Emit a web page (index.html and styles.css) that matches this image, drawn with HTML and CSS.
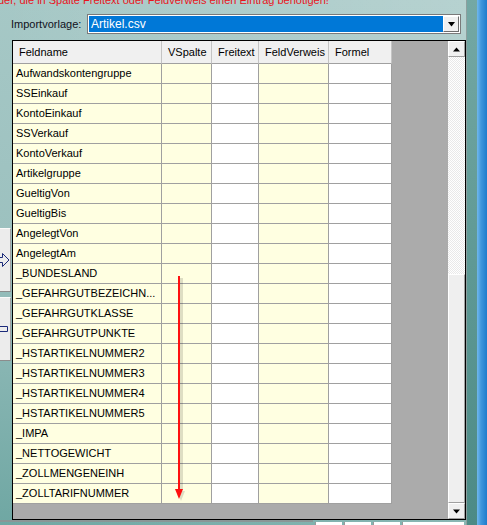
FILE: index.html
```
<!DOCTYPE html>
<html lang="de">
<head>
<meta charset="utf-8">
<title>Importvorlage</title>
<link rel="stylesheet" href="styles.css">
</head>
<body>
<div class="screen">
  <div class="panel">
    <div class="note"><span class="note-text">der, die in Spalte Freitext oder Feldverweis einen Eintrag benötigen!</span></div>
    <div class="import-row">
      <span class="import-label">Importvorlage:</span>
      <div class="combo">
        <div class="combo-value">Artikel.csv</div>
        <div class="combo-btn"><svg width="9" height="5" viewBox="0 0 9 5"><path d="M1 0H8L4.5 4.5Z" fill="#000"/></svg></div>
      </div>
    </div>
    <div class="main">
      <div class="side">
        <div class="side-btn">
          <svg class="side-icon" width="11" height="16" viewBox="0 0 11 16"><path d="M-6 5.5H2.5V1.5L9 8L2.5 14.5V10.5H-6Z" fill="none" stroke="#1b2a7a" stroke-width="1"/></svg>
        </div>
        <div class="side-btn">
          <svg class="side-icon" width="11" height="16" viewBox="0 0 11 16"><path d="M7.5 5.5H-1.5V1.5L-8 8L-1.5 14.5V10.5H7.5Z" fill="none" stroke="#1b2a7a" stroke-width="1"/></svg>
        </div>
      </div>
      <div class="grid">
        <div class="cells">
          <div class="row head">
            <div class="cell">Feldname</div>
            <div class="cell">VSpalte</div>
            <div class="cell">Freitext</div>
            <div class="cell">FeldVerweis</div>
            <div class="cell">Formel</div>
          </div>
          <div class="row"><div class="cell name">Aufwandskontengruppe</div><div class="cell y"></div><div class="cell w"></div><div class="cell y"></div><div class="cell w"></div></div>
          <div class="row"><div class="cell name">SSEinkauf</div><div class="cell y"></div><div class="cell w"></div><div class="cell y"></div><div class="cell w"></div></div>
          <div class="row"><div class="cell name">KontoEinkauf</div><div class="cell y"></div><div class="cell w"></div><div class="cell y"></div><div class="cell w"></div></div>
          <div class="row"><div class="cell name">SSVerkauf</div><div class="cell y"></div><div class="cell w"></div><div class="cell y"></div><div class="cell w"></div></div>
          <div class="row"><div class="cell name">KontoVerkauf</div><div class="cell y"></div><div class="cell w"></div><div class="cell y"></div><div class="cell w"></div></div>
          <div class="row"><div class="cell name">Artikelgruppe</div><div class="cell y"></div><div class="cell w"></div><div class="cell y"></div><div class="cell w"></div></div>
          <div class="row"><div class="cell name">GueltigVon</div><div class="cell y"></div><div class="cell w"></div><div class="cell y"></div><div class="cell w"></div></div>
          <div class="row"><div class="cell name">GueltigBis</div><div class="cell y"></div><div class="cell w"></div><div class="cell y"></div><div class="cell w"></div></div>
          <div class="row"><div class="cell name">AngelegtVon</div><div class="cell y"></div><div class="cell w"></div><div class="cell y"></div><div class="cell w"></div></div>
          <div class="row"><div class="cell name">AngelegtAm</div><div class="cell y"></div><div class="cell w"></div><div class="cell y"></div><div class="cell w"></div></div>
          <div class="row"><div class="cell name">_BUNDESLAND</div><div class="cell y"></div><div class="cell w"></div><div class="cell y"></div><div class="cell w"></div></div>
          <div class="row"><div class="cell name">_GEFAHRGUTBEZEICHN...</div><div class="cell y"></div><div class="cell w"></div><div class="cell y"></div><div class="cell w"></div></div>
          <div class="row"><div class="cell name">_GEFAHRGUTKLASSE</div><div class="cell y"></div><div class="cell w"></div><div class="cell y"></div><div class="cell w"></div></div>
          <div class="row"><div class="cell name">_GEFAHRGUTPUNKTE</div><div class="cell y"></div><div class="cell w"></div><div class="cell y"></div><div class="cell w"></div></div>
          <div class="row"><div class="cell name">_HSTARTIKELNUMMER2</div><div class="cell y"></div><div class="cell w"></div><div class="cell y"></div><div class="cell w"></div></div>
          <div class="row"><div class="cell name">_HSTARTIKELNUMMER3</div><div class="cell y"></div><div class="cell w"></div><div class="cell y"></div><div class="cell w"></div></div>
          <div class="row"><div class="cell name">_HSTARTIKELNUMMER4</div><div class="cell y"></div><div class="cell w"></div><div class="cell y"></div><div class="cell w"></div></div>
          <div class="row"><div class="cell name">_HSTARTIKELNUMMER5</div><div class="cell y"></div><div class="cell w"></div><div class="cell y"></div><div class="cell w"></div></div>
          <div class="row"><div class="cell name">_IMPA</div><div class="cell y"></div><div class="cell w"></div><div class="cell y"></div><div class="cell w"></div></div>
          <div class="row"><div class="cell name">_NETTOGEWICHT</div><div class="cell y"></div><div class="cell w"></div><div class="cell y"></div><div class="cell w"></div></div>
          <div class="row"><div class="cell name">_ZOLLMENGENEINH</div><div class="cell y"></div><div class="cell w"></div><div class="cell y"></div><div class="cell w"></div></div>
          <div class="row"><div class="cell name">_ZOLLTARIFNUMMER</div><div class="cell y"></div><div class="cell w"></div><div class="cell y"></div><div class="cell w"></div></div>
        </div>
        <div class="vscroll">
          <div class="sb-btn"><svg width="9" height="5" viewBox="0 0 9 5"><path d="M4.5 0.5L8 4.5H1Z" fill="#000"/></svg></div>
          <div class="sb-track"></div>
          <div class="sb-thumb"></div>
          <div class="sb-btn"><svg width="9" height="5" viewBox="0 0 9 5"><path d="M1 0.5H8L4.5 4.5Z" fill="#000"/></svg></div>
        </div>
        <svg class="red-arrow" width="18" height="228" viewBox="0 0 18 228">
          <rect x="9" y="3" width="3" height="212" fill="rgba(0,0,0,0.13)"/>
          <path d="M6 216H14L10 226Z" fill="rgba(0,0,0,0.13)"/>
          <rect x="7" y="1" width="2" height="214" fill="#ff1010"/>
          <path d="M4 214H12L8 224Z" fill="#ff1010"/>
        </svg>
      </div>
    </div>
    <div class="footer">
      <div class="ft-fill"></div>
      <div class="ft-tab"></div>
      <div class="ft-tab"></div>
      <div class="ft-tab"></div>
      <div class="ft-tab wide"></div>
    </div>
  </div>
  <div class="frame"></div>
  <div class="desktop"></div>
</div>
</body>
</html>
```
FILE: styles.css
```
* { box-sizing: border-box; }
html, body { margin: 0; padding: 0; }
body {
  width: 487px;
  height: 525px;
  overflow: hidden;
  font-family: "Liberation Sans", Arial, sans-serif;
  font-size: 11px;
  color: #000;
}
.screen {
  display: flex;
  width: 487px;
  height: 525px;
  overflow: hidden;
}
.panel {
  width: 467px;
  flex: none;
  border-right: 1px solid #8d9f9e;
  background:
    linear-gradient(90deg, rgba(255,255,255,0) 0%, rgba(255,255,255,0.18) 100%),
    linear-gradient(180deg, #a6c8c6 0%, #9cc1bf 45%, #6fa7a3 100%);
  display: flex;
  flex-direction: column;
}
.frame {
  width: 10px;
  flex: none;
  background: linear-gradient(180deg, #74a8a4 0%, #5f9995 50%, #4c8a85 100%);
}
.desktop {
  flex: 1;
  background: linear-gradient(90deg, #72b8ec 0%, #3f97dc 40%, #1f7ccc 100%);
}
.note {
  height: 8px;
  overflow: hidden;
  color: #e8141c;
  white-space: nowrap;
}
.note-text {
  display: block;
  margin-top: -7px;
  margin-left: -2px;
  line-height: 14px;
  font-size: 11px;
}
.import-row {
  display: flex;
  align-items: center;
  margin-top: 6px;
  height: 20px;
  padding-left: 11px;
}
.import-label {
  width: 76px;
  line-height: 20px;
  color: #101020;
}
.combo {
  width: 374px;
  height: 20px;
  border: 1px solid #7a7a7a;
  background: #fff;
  padding: 1px;
  display: flex;
}
.combo-value {
  flex: 1;
  background: #0078d7;
  color: #fff;
  line-height: 16px;
  padding-left: 2px;
  font-size: 12px;
}
.combo-btn {
  width: 16px;
  background: #f0f0f0;
  border: 1px solid;
  border-color: #fff #6d6d6d #6d6d6d #fff;
  display: flex;
  align-items: center;
  justify-content: center;
}
.main {
  margin-top: 6px;
  height: 480px;
  display: flex;
}
.side {
  width: 12px;
  flex: none;
  padding-top: 188px;
  display: flex;
  flex-direction: column;
  gap: 5px;
}
.side-btn {
  width: 11px;
  height: 64px;
  background: #ececec;
  border-top: 1px solid #fafafa;
  border-bottom: 1px solid #8c8c8c;
  border-right: 1px solid #a0a0a0;
  overflow: hidden;
  display: flex;
  align-items: center;
}
.side-icon { display: block; flex: none; }
.grid {
  position: relative;
  width: 454px;
  height: 480px;
  border: 1px solid #000;
  display: flex;
}
.cells {
  flex: 1;
  background: #ababab;
}
.row {
  display: grid;
  grid-template-columns: 149px 50px 47px 70px 63px;
  height: 20px;
}
.row.head { height: 23px; }
.cell {
  border-right: 1px solid #a0a0a0;
  border-bottom: 1px solid #a0a0a0;
  line-height: 19px;
  white-space: nowrap;
  overflow: hidden;
}
.head .cell {
  background: #f0f0f0;
  line-height: 22px;
  padding-left: 6px;
  border-right-color: #c4c4c4;
  border-bottom-color: #a0a0a0;
}
.cell.name {
  background: #ffffe1;
  padding-left: 3px;
}
.cell.y { background: #ffffe1; }
.cell.w { background: #fff; }
.vscroll {
  width: 17px;
  flex: none;
  display: flex;
  flex-direction: column;
}
.sb-btn {
  height: 16px;
  background: #f0f0f0;
  border: 1px solid;
  border-color: #fff #a0a0a0 #a0a0a0 #fff;
  display: flex;
  align-items: center;
  justify-content: center;
}
.sb-track {
  flex: 1;
  background-color: #fff;
  background-image: repeating-conic-gradient(#e9e9e9 0 25%, #fff 0 50%);
  background-size: 2px 2px;
}
.sb-thumb {
  height: 229px;
  background: #efefef;
  border: 1px solid;
  border-color: #fff #a0a0a0 #a0a0a0 #fff;
}
.red-arrow {
  position: absolute;
  left: 158px;
  top: 234px;
}
.footer {
  height: 5px;
  display: flex;
  gap: 2px;
}
.ft-fill {
  width: 313px;
  border-top: 2px solid #8a9696;
}
.ft-tab {
  width: 27px;
  margin-top: 2px;
  background: #fff;
  border-left: 1px solid #9a9a9a;
}
.ft-tab.wide { width: 62px; }
```
